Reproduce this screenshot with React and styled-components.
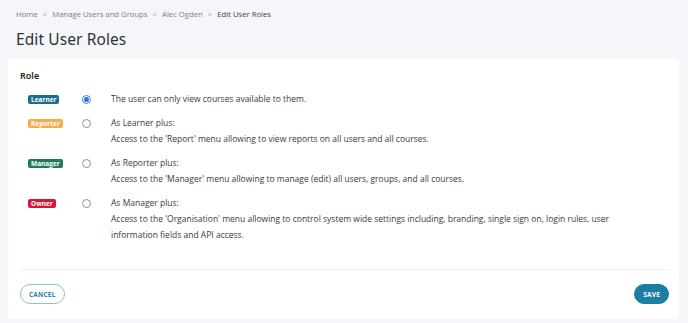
import React, { useState } from 'react';
import styled, { createGlobalStyle } from 'styled-components';

const GlobalStyle = createGlobalStyle`
  html, body {
    margin: 0;
    padding: 0;
    background: #f4f6f9;
    font-family: "Open Sans", "Liberation Sans", sans-serif;
  }
`;

const Page = styled.div`
  width: 688px;
  height: 323px;
  box-sizing: border-box;
  padding: 8px 9px 4px 8px;
  display: flex;
  flex-direction: column;
`;

const Breadcrumb = styled.nav`
  display: flex;
  align-items: center;
  gap: 5px;
  padding: 0 0 0 8px;
  font-size: 7.7px;
  line-height: 12px;
  color: #7c8086;
`;

const Crumb = styled.span`
  color: ${p => (p.current ? '#3f4348' : '#7c8086')};
`;

const Chevron = styled.span`
  color: #a5a9ae;
  font-size: 8px;
`;

const Title = styled.h1`
  margin: 8px 0 0 8px;
  font-family: "Noto Sans", "Open Sans", sans-serif;
  font-weight: 400;
  font-size: 15.5px;
  line-height: 22px;
  color: #2f3338;
  letter-spacing: 0.1px;
`;

const Card = styled.section`
  margin-top: 9px;
  background: #ffffff;
  flex: 1;
  display: flex;
  flex-direction: column;
  padding: 11px 10px 15px 12px;
`;

const Label = styled.div`
  font-family: "Noto Sans", "Open Sans", sans-serif;
  font-weight: 600;
  font-size: 9px;
  line-height: 12px;
  color: #22262a;
`;

const RoleList = styled.div`
  display: flex;
  flex-direction: column;
  gap: 8px;
  margin-top: 9px;
`;

const RoleRow = styled.label`
  display: grid;
  grid-template-columns: 54px 29px 1fr;
  align-items: start;
  padding-left: 8px;
  cursor: pointer;
`;

const Badge = styled.span`
  justify-self: start;
  margin-top: 4px;
  background: ${p => p.color};
  color: #fff;
  font-size: 6.5px;
  font-weight: 700;
  line-height: 9px;
  padding: 0 3px;
  border-radius: 2px;
`;

const Radio = styled.span`
  margin-top: 4px;
  width: 7px;
  height: 7px;
  border-radius: 50%;
  border: 1px solid ${p => (p.checked ? '#3b82f6' : '#8b8f94')};
  display: flex;
  align-items: center;
  justify-content: center;
  &::after {
    content: '';
    width: 5px;
    height: 5px;
    border-radius: 50%;
    background: ${p => (p.checked ? '#2f6fe0' : 'transparent')};
  }
`;

const Desc = styled.div`
  font-size: 8.5px;
  line-height: 16px;
  color: #373b40;
`;

const Divider = styled.hr`
  margin: auto 0 0 0;
  border: none;
  border-top: 1px solid #eef0f2;
`;

const Footer = styled.div`
  display: flex;
  justify-content: space-between;
  margin-top: 14px;
`;

const Button = styled.button`
  height: 20px;
  padding: 0 8px;
  border-radius: 10px;
  font-family: "Open Sans", sans-serif;
  font-weight: 700;
  font-size: 6.5px;
  letter-spacing: 0.2px;
  border: 1px solid ${p => (p.primary ? '#1d7ea4' : '#8cc0d2')};
  background: ${p => (p.primary ? '#1d7ea4' : '#fff')};
  color: ${p => (p.primary ? '#fff' : '#2f7f9c')};
`;

const roles = [
  { name: 'Learner', color: '#1b6d8d', lines: ['The user can only view courses available to them.'] },
  {
    name: 'Reporter',
    color: '#f4ad4b',
    lines: ['As Learner plus:', "Access to the 'Report' menu allowing to view reports on all users and all courses."],
  },
  {
    name: 'Manager',
    color: '#1d7a5b',
    lines: ['As Reporter plus:', "Access to the 'Manager' menu allowing to manage (edit) all users, groups, and all courses."],
  },
  {
    name: 'Owner',
    color: '#d3173d',
    lines: [
      'As Manager plus:',
      "Access to the 'Organisation' menu allowing to control system wide settings including, branding, single sign on, login rules, user",
      'information fields and API access.',
    ],
  },
];

export default function App() {
  const [role, setRole] = useState('Learner');
  return (
    <Page>
      <GlobalStyle />
      <Breadcrumb>
        <Crumb>Home</Crumb>
        <Chevron>&gt;</Chevron>
        <Crumb>Manage Users and Groups</Crumb>
        <Chevron>&gt;</Chevron>
        <Crumb>Alec Ogden</Crumb>
        <Chevron>&gt;</Chevron>
        <Crumb current>Edit User Roles</Crumb>
      </Breadcrumb>
      <Title>Edit User Roles</Title>
      <Card>
        <Label>Role</Label>
        <RoleList>
          {roles.map(r => (
            <RoleRow key={r.name} onClick={() => setRole(r.name)}>
              <Badge color={r.color}>{r.name}</Badge>
              <Radio checked={role === r.name} />
              <Desc>
                {r.lines.map(l => (
                  <div key={l}>{l}</div>
                ))}
              </Desc>
            </RoleRow>
          ))}
        </RoleList>
        <Divider />
        <Footer>
          <Button>CANCEL</Button>
          <Button primary>SAVE</Button>
        </Footer>
      </Card>
    </Page>
  );
}
